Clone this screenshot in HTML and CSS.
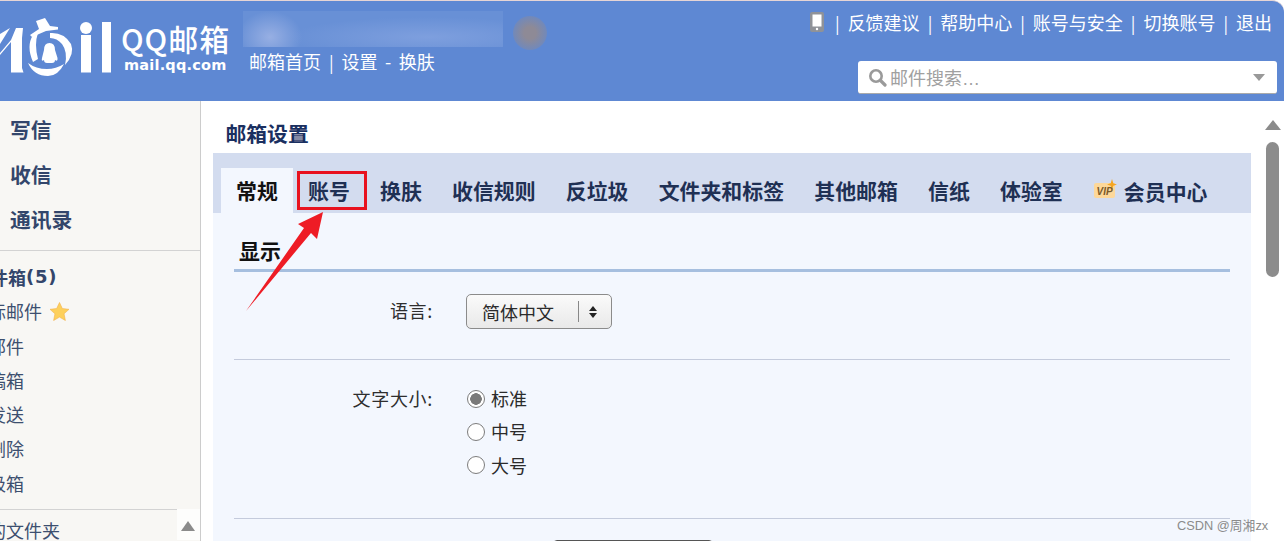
FILE: index.html
```html
<!DOCTYPE html>
<html lang="zh-CN">
<head>
<meta charset="utf-8">
<title>邮箱设置</title>
<link rel="stylesheet" href="styles.css">
</head>
<body>
<header class="header">
  <div class="brand">
    <svg class="logo" width="113" height="85" viewBox="0 0 113 85">
      <path class="logo-fill" d="M0 34 L10 28 L0 44 Z"/>
      <path class="logo-fill" d="M0 53 L11 40 L16 28 H23 L22 38 V68 L23.5 72.5 H11 V42 L0 55 Z"/>
      <path class="logo-fill" d="M30 35 L39 29 L36 21 L45 18 L50 26 L58 27 L58 29.5 L46 31 L32 37 Z"/>
      <path class="logo-fill" d="M38 33 Q34 44 38 59 L33 62 Q26 46 33 35 Z"/>
      <path class="logo-fill" d="M50 33 Q64 32 71 44 Q75 54 65 65 Q68 52 62 44 Q57 38 50 38 Z"/>
      <path class="logo-fill" d="M28 63 Q36 69 47 69 Q56 69 64 64 Q58 76 48 76 Q34 76 28 63 Z"/>
      <path class="logo-fill" d="M49.5 43 Q55 43 55 50 L57.5 58 Q58 62 55 60 Q55 63 52 63 L47 63 Q44 63 44 60 Q41 62 42 58 L44 50 Q44 43 49.5 43 Z"/>
      <circle class="logo-fill" cx="86" cy="28" r="6"/>
      <rect class="logo-fill" x="81" y="35" width="10" height="37.5"/>
      <rect class="logo-fill" x="102" y="22" width="9" height="50.5"/>
    </svg>
    <div class="brand-text">
      <div class="brand-name">QQ邮箱</div>
      <div class="brand-url">mail.qq.com</div>
    </div>
  </div>
  <div class="account">
    <nav class="account-links">邮箱首页<span class="sep">|</span>设置<span class="dash">-</span>换肤</nav>
  </div>
  <div class="tools">
    <nav class="top-links">
      <svg class="phone" width="14" height="20" viewBox="0 0 14 20"><rect width="14" height="20" rx="2" fill="#8f9298"/><rect x="2.5" y="2.5" width="9" height="12" fill="#fff"/><circle cx="7" cy="17" r="1.2" fill="#fff"/></svg>
      <span class="sep first">|</span>反馈建议<span class="sep">|</span>帮助中心<span class="sep">|</span>账号与安全<span class="sep">|</span>切换账号<span class="sep">|</span>退出
    </nav>
    <div class="search">
      <svg class="glass" width="19" height="19" viewBox="0 0 19 19"><circle cx="8" cy="8" r="5.7" fill="none" stroke="#9a9a9a" stroke-width="2.6"/><path d="M12.5 12.5 L17 17" stroke="#9a9a9a" stroke-width="3.2" stroke-linecap="round"/></svg>
      <span class="search-text">邮件搜索<span class="ellipsis">…</span></span>
      <span class="search-caret"></span>
    </div>
  </div>
</header>
<div class="blur-band"></div>
<div class="blur-dot"></div>

<div class="content">
  <aside class="sidebar">
    <div class="quick">
      <div class="quick-item">写信</div>
      <div class="quick-item">收信</div>
      <div class="quick-item">通讯录</div>
    </div>
    <ul class="folders">
      <li class="folder inbox">收件箱<span class="count">(5)</span></li>
      <li class="folder">星标邮件
        <svg class="star" width="19" height="19" viewBox="0 0 20 19"><path d="M10 0 L13 6.4 L20 7.2 L14.8 11.9 L16.2 19 L10 15.4 L3.8 19 L5.2 11.9 L0 7.2 L7 6.4 Z" fill="#fdd05c" stroke="#f2b04a" stroke-width=".6"/></svg>
      </li>
      <li class="folder">群邮件</li>
      <li class="folder">草稿箱</li>
      <li class="folder">已发送</li>
      <li class="folder">已删除</li>
      <li class="folder">垃圾箱</li>
    </ul>
    <div class="my-folders">
      <span class="my-folders-text">我的文件夹</span>
      <span class="side-scroll"><span class="arrow-up"></span></span>
    </div>
  </aside>

  <main class="main">
    <h1 class="page-title">邮箱设置</h1>
    <section class="panel">
      <div class="tabs">
        <span class="tab active">常规</span>
        <span class="tab">账号</span>
        <span class="tab">换肤</span>
        <span class="tab">收信规则</span>
        <span class="tab">反垃圾</span>
        <span class="tab">文件夹和标签</span>
        <span class="tab">其他邮箱</span>
        <span class="tab">信纸</span>
        <span class="tab">体验室</span>
        <span class="tab vip">
          <svg class="vip-icon" width="23" height="19" viewBox="0 0 23 19"><rect x="0" y="4" width="21" height="15" rx="2" fill="#fdd89a"/><path d="M18 0 L19.3 4.2 L23 5.5 L19.3 6.8 L18 11 L16.7 6.8 L13 5.5 L16.7 4.2 Z" fill="#f5a623"/><text x="2.5" y="15.5" class="vip-text">VIP</text></svg>
          会员中心
        </span>
      </div>
      <div class="panel-body">
        <h2 class="section-title">显示</h2>
        <div class="row row-lang">
          <div class="row-label">语言:</div>
          <div class="select">
            <span class="select-text">简体中文</span>
            <span class="select-sep"></span>
            <span class="select-arrows"><i class="tri-up"></i><i class="tri-down"></i></span>
          </div>
        </div>
        <div class="row row-size">
          <div class="row-label">文字大小:</div>
          <div class="radios">
            <div class="radio-line"><span class="radio checked"></span>标准</div>
            <div class="radio-line"><span class="radio"></span>中号</div>
            <div class="radio-line"><span class="radio"></span>大号</div>
          </div>
        </div>
        <div class="row row-next">
          <div class="row-label"></div>
          <div class="next-select"></div>
        </div>
      </div>
    </section>
  </main>

  <div class="scrollbar">
    <span class="arrow-up big"></span>
    <span class="thumb"></span>
  </div>
</div>

<div class="callout-box"></div>
<svg class="callout-arrow" width="90" height="110" viewBox="240 208 90 110"><path d="M323 212 L317 239 L311 233 L246 311 L304 228 L298 224 Z" fill="#ee1c25"/></svg>
<div class="watermark">CSDN @周湘zx</div>
</body>
</html>
```
FILE: styles.css
```css
* { box-sizing: border-box; }
html, body { margin: 0; padding: 0; }
body {
  position: relative;
  width: 1284px;
  height: 541px;
  overflow: hidden;
  background: #fff;
  font-family: "Noto Sans CJK SC", "Liberation Sans", sans-serif;
  font-size: 18px;
  color: #2b2b2b;
}

/* Header */
.header {
  height: 101px;
  display: flex;
  background: #5e88d3;
  border-top: 1px solid #e6d5d5;
  border-top-right-radius: 12px;
  color: #fff;
}
.brand { width: 243px; display: flex; flex: none; }
.logo { flex: none; margin-top: -1px; }
.logo-fill { fill: #fff; }
.brand-text { margin-left: 8px; padding-top: 20px; white-space: nowrap; }
.brand-name { font-size: 30px; line-height: 35px; font-weight: 500; letter-spacing: 1px; }
.brand-url { font-family: "DejaVu Sans", sans-serif; font-size: 14.5px; line-height: 18px; font-weight: 700; letter-spacing: .2px; margin-left: 3px; }
.account { width: 300px; flex: none; padding: 45px 0 0 6px; }
.account-links { line-height: 30px; white-space: nowrap; }
.sep { margin: 0 8px; font-size: 17px; }
.dash { margin: 0 7.5px; }
.tools { flex: 1; display: flex; flex-direction: column; align-items: flex-end; padding-right: 7px; }
.top-links { height: 42px; padding-right: 5px; display: flex; align-items: center; white-space: nowrap; }
.phone { margin-right: 3px; }
.search {
  width: 419px;
  height: 33px;
  margin-top: 18px;
  display: flex;
  align-items: center;
  padding: 0 12px 0 10px;
  background: #fff;
  border-radius: 3px;
  border-bottom: 1px solid #aaa;
}
.search-text { margin-left: 3px; flex: 1; color: #a0a0a0; }
.ellipsis { font-family: "Liberation Sans", sans-serif; }
.search-caret { width: 0; height: 0; border: 6px solid transparent; border-top: 7px solid #999; border-bottom: 0; }

/* Redaction blur */
.blur-band {
  position: absolute;
  left: 243px;
  top: 11px;
  width: 260px;
  height: 36px;
  background:
    radial-gradient(ellipse 32px 26px at 27px 26px, #97afe3, transparent),
    radial-gradient(ellipse 140px 20px at 185px 26px, #7e9fde, transparent),
    #6890d6;
}
.blur-dot {
  position: absolute;
  left: 513px;
  top: 16px;
  width: 34px;
  height: 34px;
  border-radius: 50%;
  background: radial-gradient(circle, #8e8a96 0 25%, rgba(142, 138, 150, 0) 100%);
}

/* Layout */
.content { display: flex; height: 440px; overflow: hidden; }
.sidebar {
  width: 201px;
  flex: none;
  display: flex;
  flex-direction: column;
  background: #f8f7f4;
  border-right: 1px solid #ccc;
  overflow: hidden;
  color: #3d4f6f;
}
.quick { height: 150px; flex: none; padding: 6px 0 0 10px; border-bottom: 1px solid #d3d3d3; }
.quick-item { font-size: 20.8px; font-weight: 700; line-height: 45px; color: #33466b; }
.folders { list-style: none; margin: 0; padding: 9px 0 0; height: 258px; flex: none; }
.folder { margin-left: -30px; line-height: 34.3px; height: 34.3px; white-space: nowrap; display: flex; align-items: center; }
.inbox { margin-left: -28px; font-weight: 700; color: #33466b; }
.count { font-family: "DejaVu Sans", sans-serif; font-size: 18px; letter-spacing: .8px; }
.star { margin-left: 8px; }
.my-folders { flex: none; height: 31px; display: flex; justify-content: space-between; overflow: hidden; }
.my-folders-text { margin-left: -30px; padding-top: 7px; line-height: 26px; white-space: nowrap; border-top: 1px solid #d3d3d3; flex: 0 0 222px; height: 40px; }
.side-scroll { width: 23px; flex: none; margin-left: -15px; background: #fdfdfc; padding: 12px 0 0 4px; }
.arrow-up { display: block; width: 0; height: 0; border: 7px solid transparent; border-bottom: 10px solid #8b8b8b; border-top: 0; }

.main { flex: 1; min-width: 0; padding-left: 12px; }
.page-title {
  margin: 0;
  height: 52px;
  padding: 12px 0 0 12.5px;
  font-size: 20.8px;
  line-height: 40px;
  font-weight: 700;
  color: #1a2f60;
}
.panel { background: #f3f7fe; height: 388px; overflow: hidden; }
.tabs { height: 60px; padding: 15px 0 0 8px; display: flex; background: #d3dcef; }
.tab { height: 45px; line-height: 44px; padding: 0 15.1px; font-size: 20.9px; font-weight: 700; color: #1f3054; white-space: nowrap; }
.tab.active { background: #f3f7fe; color: #111; }
.tab.vip { display: flex; align-items: center; margin-left: 1px; line-height: 48px; }
.vip-icon { margin-right: 7px; margin-top: -4px; }
.vip-text { font-family: "Liberation Sans", sans-serif; font-size: 10px; font-style: italic; font-weight: 700; fill: #7a5a2a; }

.panel-body { padding: 0 21px; }
.section-title {
  margin: 0;
  height: 59px;
  padding: 18px 0 0 5px;
  font-size: 20.9px;
  line-height: 38px;
  font-weight: 700;
  color: #111;
  border-bottom: 3px solid #a6bfdf;
}
.row { display: flex; border-bottom: 1px solid #c4cbdc; }
.row-lang { height: 88px; padding-top: 22px; }
.row-size { height: 159px; padding-top: 22px; }
.row-next { border-bottom: 0; padding-top: 21px; }
.row-label { width: 199px; text-align: right; line-height: 33px; flex: none; color: #2e2e2e; letter-spacing: .7px; }
.select {
  width: 146px;
  height: 35px;
  margin-left: 33px;
  display: flex;
  align-items: center;
  padding: 0 13px 0 15px;
  background: linear-gradient(#fafafa, #e9e9e9);
  border: 1px solid #8b8b8b;
  border-radius: 5px;
}
.select-text { width: 96px; white-space: nowrap; flex: none; }
.select-sep { width: 1px; height: 21px; background: #888; flex: none; }
.select-arrows { margin-left: 10px; display: flex; flex-direction: column; gap: 2px; }
.tri-up, .tri-down { display: block; width: 0; height: 0; border: 4px solid transparent; }
.tri-up { border-bottom: 5px solid #222; border-top: 0; }
.tri-down { border-top: 5px solid #222; border-bottom: 0; }
.radios { margin-left: 34px; }
.radio-line { height: 33.3px; display: flex; align-items: center; line-height: 33px; }
.radio { width: 18px; height: 18px; margin-right: 6px; border-radius: 50%; border: 1.5px solid #7c7c7c; background: #fff; flex: none; }
.radio.checked { background: radial-gradient(circle, #7a7a7a 0 5.5px, #fff 6px); }
.next-select { width: 160px; height: 30px; margin-left: 120px; border: 1px solid #555; border-radius: 4px; }

.scrollbar { width: 33px; flex: none; padding: 19px 0 0 14px; background: #fff; }
.arrow-up.big { border-left-width: 8px; border-right-width: 8px; border-bottom-width: 10px; }
.thumb { display: block; width: 13px; height: 135px; margin-top: 12px; margin-left: 1px; border-radius: 7px; background: #8c8c8c; }

/* Overlays */
.callout-box { position: absolute; left: 297px; top: 171px; width: 70px; height: 39px; border: 3px solid #e8121f; }
.callout-arrow { position: absolute; left: 240px; top: 208px; }
.watermark { position: absolute; left: 1177px; top: 517px; font-family: "Liberation Sans", "Noto Sans CJK SC", sans-serif; font-size: 12.8px; line-height: 18px; color: #8b8b8b; }
```
